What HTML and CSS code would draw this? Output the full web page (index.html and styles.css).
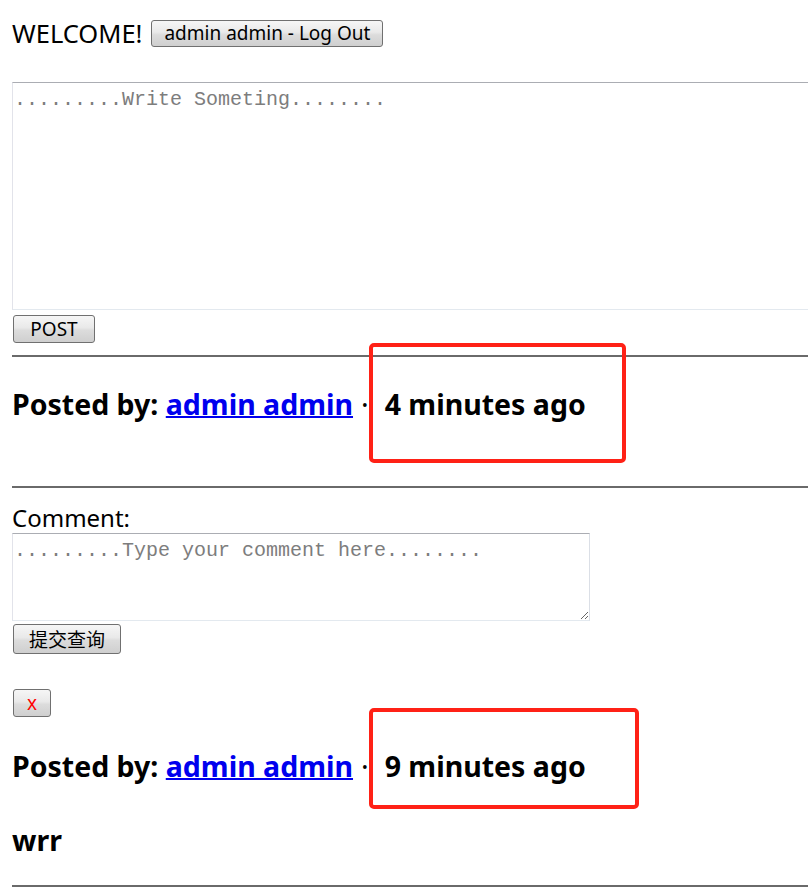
FILE: index.html
```html
<!DOCTYPE html>
<html>
<head>
<meta charset="utf-8">
<link rel="stylesheet" href="styles.css">
</head>
<body>
<div class="page">
  <div class="welcome">
    <span class="welcome-text">WELCOME!</span>
    <button class="btn btn-logout">admin admin - Log Out</button>
  </div>
  <form class="new-post">
    <textarea class="post-area" placeholder=".........Write Someting........"></textarea>
    <button type="button" class="btn btn-post">POST</button>
  </form>
  <hr class="rule rule-1">
  <div class="post">
    <h3 class="post-head">Posted by: <a href="#" class="author">admin admin</a><span class="sep">·</span>4 minutes ago</h3>
    <div class="mark mark-1"></div>
  </div>
  <hr class="rule rule-2">
  <div class="comment">
    <label class="comment-label">Comment:</label>
    <textarea class="comment-area" placeholder=".........Type your comment here........"></textarea>
    <button type="button" class="btn btn-submit">提交查询</button>
  </div>
  <button type="button" class="btn btn-x">x</button>
  <div class="post post-2">
    <h3 class="post-head">Posted by: <a href="#" class="author">admin admin</a><span class="sep">·</span>9 minutes ago</h3>
    <div class="mark mark-2"></div>
  </div>
  <h3 class="post-body">wrr</h3>
  <hr class="rule rule-3">
</div>
</body>
</html>
```

FILE: styles.css
```css
html, body {
  margin: 0;
  padding: 0;
  background: #fff;
}
.page {
  position: relative;
  overflow: hidden;
  height: 889px;
  padding-left: 12px;
  font-family: "Noto Sans", "Noto Sans CJK SC", sans-serif;
  color: #000;
  box-sizing: border-box;
}
.welcome {
  display: flex;
  align-items: center;
  height: 28px;
  margin-top: 19px;
}
.welcome-text {
  font-size: 25.5px;
  margin-right: 9px;
  line-height: 28px;
}
.btn {
  font-family: "Noto Sans", "Noto Sans CJK SC", sans-serif;
  border: 1px solid #707070;
  border-radius: 3px;
  background: linear-gradient(#f6f6f6 0%, #e9e9e9 45%, #dcdcdc 55%, #cfcfcf 100%);
  color: #000;
  padding: 0;
  margin: 0;
  box-sizing: border-box;
  display: block;
}
.btn-logout {
  width: 232px;
  height: 27px;
  font-size: 19px;
  line-height: 24px;
}
.new-post {
  margin: 35px 0 0 0;
}
.post-area {
  display: block;
  width: 820px;
  height: 228px;
  box-sizing: border-box;
  margin: 0;
  border: 1px solid;
  border-color: #abadb3 #dbdfe6 #e3e9ef #e2e3ea;
  font-family: "Liberation Mono", monospace;
  font-size: 20px;
  padding: 5px 1px;
  resize: none;
}
.post-area::placeholder, .comment-area::placeholder {
  color: #7d7d7d;
}
.btn-post {
  margin: 5px 0 0 1px;
  width: 82px;
  height: 28px;
  font-size: 19px;
}
.rule {
  border: 0;
  border-top: 2px solid #6a6a6a;
  margin: 0 -20px 0 0;
  height: 0;
}
.rule-1 { margin-top: 12px; }
.post {
  position: relative;
}
.post-head {
  margin: 0;
  font-size: 28.5px;
  font-weight: bold;
  line-height: 36px;
  white-space: nowrap;
}
.post .post-head {
  padding-top: 29px;
}
.author {
  color: #0000ee;
  text-decoration: underline;
  text-decoration-thickness: 2px;
}
.sep {
  margin: 0 16px 0 8px;
  font-weight: normal;
}
.mark {
  position: absolute;
  border: 4px solid #ff2116;
  border-radius: 5px;
  box-sizing: border-box;
}
.mark-1 {
  left: 357px;
  top: -14px;
  width: 257px;
  height: 120px;
}
.rule-2 { margin-top: 64px; }
.comment {
  margin-top: 16px;
}
.comment-label {
  display: block;
  font-size: 24px;
  line-height: 28px;
}
.comment-area {
  display: block;
  width: 578px;
  height: 88px;
  box-sizing: border-box;
  margin: 1px 0 0 0;
  border: 1px solid;
  border-color: #abadb3 #dbdfe6 #e3e9ef #e2e3ea;
  font-family: "Liberation Mono", monospace;
  font-size: 20px;
  padding: 5px 1px;
}
.btn-submit {
  margin: 3px 0 0 1px;
  width: 108px;
  height: 30px;
  font-size: 19px;
}
.btn-x {
  margin: 35px 0 0 1px;
  width: 38px;
  height: 28px;
  font-size: 19px;
  color: #ff0000;
  line-height: 24px;
}
.post-2 .post-head {
  padding-top: 31px;
}
.mark-2 {
  left: 357px;
  top: -9px;
  width: 270px;
  height: 101px;
}
.post-body {
  margin: 38px 0 0 0;
  font-size: 28.5px;
  line-height: 36px;
}
.rule-3 { margin-top: 27px; }
```
